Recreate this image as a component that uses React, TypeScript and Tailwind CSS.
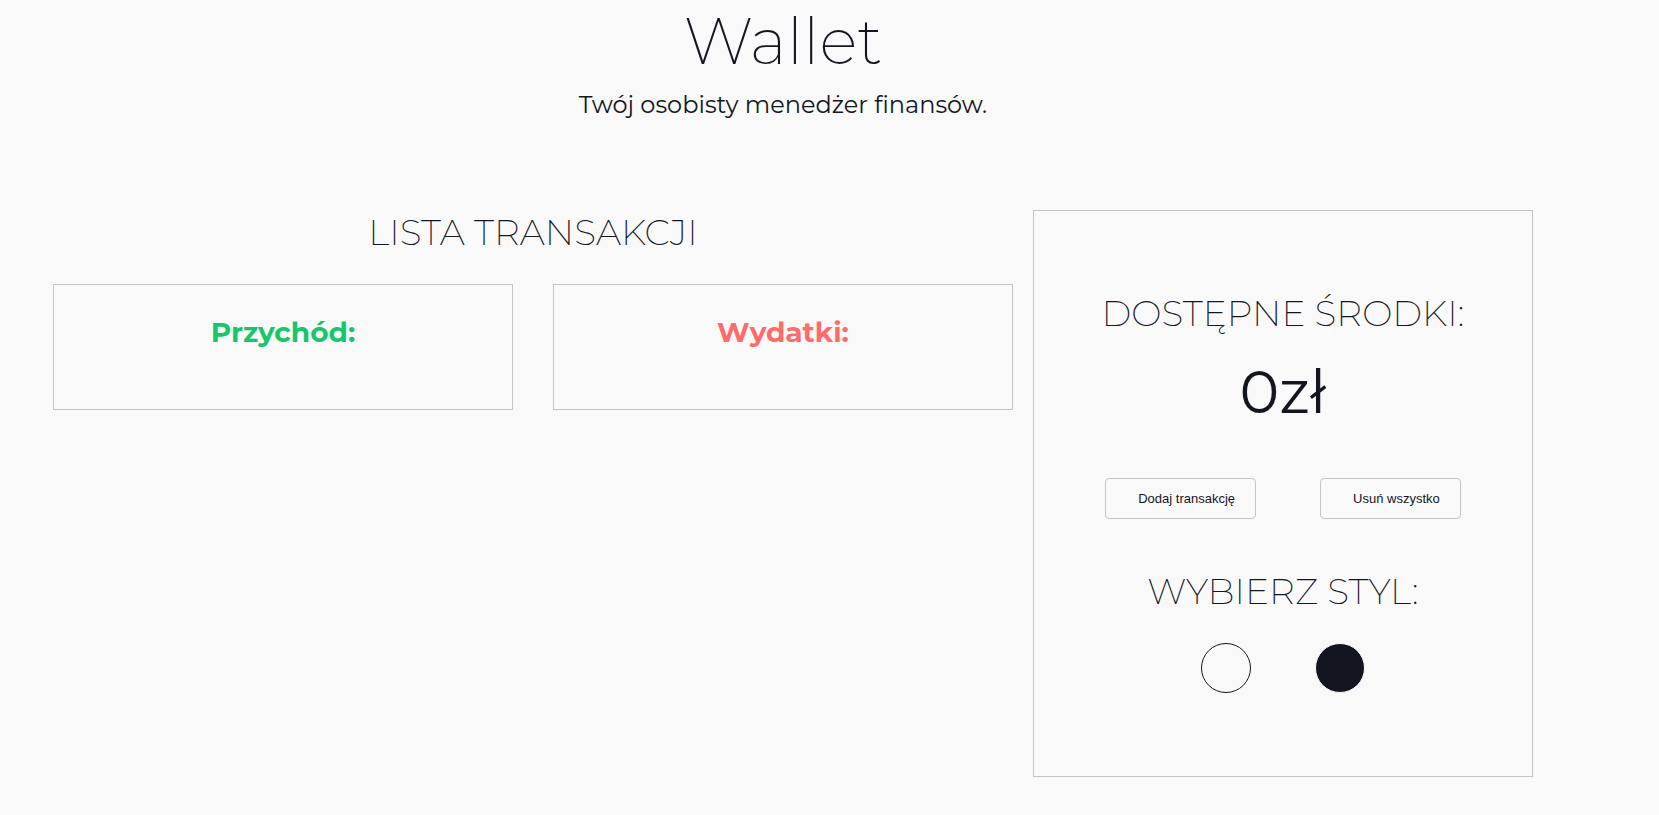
const heading = "text-[36px] leading-[44px] font-extralight uppercase";
const action =
  "h-[41px] rounded border border-[#c4c4c4] pl-8 pr-5 font-['Liberation_Sans',Arial,sans-serif] text-[13px] leading-4";

export default function App() {
  return (
    <div className="min-h-screen bg-[#f9f9f9] pb-9 pl-[33px] pr-[126px] font-[Montserrat,Inter,sans-serif] text-[#14161f]">
      <header className="text-center">
        <h1 className="text-[64px] leading-[82px] font-extralight">Wallet</h1>
        <p className="pt-[7px] text-[24px] leading-8">Twój osobisty menedżer finansów.</p>
      </header>

      <main className="mt-[89px] grid grid-cols-[2fr_1fr] items-start">
        <section className="px-5" aria-labelledby="transactions">
          <h2 id="transactions" className={`text-center ${heading}`}>
            Lista transakcji
          </h2>
          <div className="mt-[30px] grid grid-cols-2 gap-10 text-center text-[28px] leading-9 font-bold">
            <div className="border border-[#c4c4c4] pt-[29px] pb-[59px]">
              <h3 className="text-[#14c76a]">Przychód:</h3>
            </div>
            <div className="border border-[#c4c4c4] pt-[29px] pb-[59px]">
              <h3 className="text-[#ff6b6b]">Wydatki:</h3>
            </div>
          </div>
        </section>

        <section className="flex flex-col items-center border border-[#c4c4c4] pt-20 pb-[83px]">
          <h2 className={heading}>Dostępne środki:</h2>
          <p className="mt-[21px] text-[60px] leading-[72px]">0zł</p>
          <div className="mt-[50px] flex gap-16">
            <button type="button" className={action}>Dodaj transakcję</button>
            <button type="button" className={action}>Usuń wszystko</button>
          </div>
          <h2 className={`mt-[50px] ${heading}`}>Wybierz styl:</h2>
          <div className="mt-[30px] flex gap-16">
            <button
              type="button"
              aria-label="Jasny"
              className="size-[50px] rounded-full border border-[#14161f] bg-[#f9f9f9]"
            />
            <button
              type="button"
              aria-label="Ciemny"
              className="size-[50px] rounded-full border border-[#f9f9f9] bg-[#14161f]"
            />
          </div>
        </section>
      </main>
    </div>
  );
}
